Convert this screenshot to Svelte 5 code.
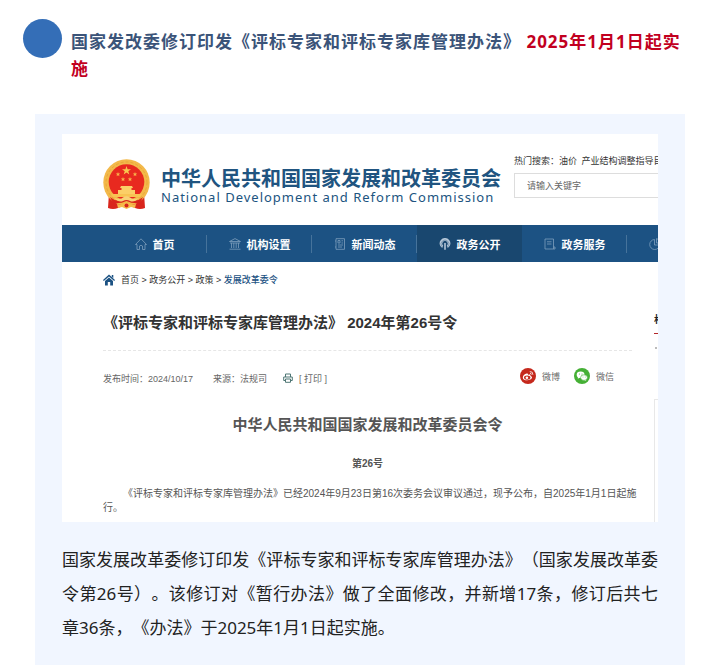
<script lang="ts">
    const navItems = [
        { label: "首页", icon: "home" },
        { label: "机构设置", icon: "bank" },
        { label: "新闻动态", icon: "news" },
        { label: "政务公开", icon: "signal", active: true },
        { label: "政务服务", icon: "doc" },
        { label: "互动交流", icon: "pie" },
    ];

    const crumbs = ["首页", "政务公开", "政策"];

    let keyword = $state("");
</script>

<article class="post">
    <header class="heading">
        <span class="dot"></span>
        <h1>
            国家发改委修订印发《评标专家和评标专家库管理办法》
            <strong>2025年1月1日起实施</strong>
        </h1>
    </header>

    <section class="card">
        <div class="site">
            <div class="masthead">
                <svg class="emblem" viewBox="0 0 47 51">
                    <path d="M6 34 L5 49 Q10 51 15 49 L24 45 L32 49 Q37 51 42 49 L41 34Z" fill="#d9251c" />
                    <circle cx="23.500" cy="23.500" r="23.200" fill="#f3b94a" />
                    <circle cx="23.500" cy="23.500" r="20.500" fill="none" stroke="#e9a838" stroke-width="1" stroke-dasharray="3 2" />
                    <circle cx="23.500" cy="23" r="17.800" fill="#e8291f" />
                    <path d="M23.500 7 L24.600 10.200 H28 L25.300 12.200 L26.300 15.500 L23.500 13.500 L20.700 15.500 L21.700 12.200 L19 10.200 H22.400Z" fill="#f8c750" />
                    <g fill="#f8b04a">
                        <path d="M15 13 l.6 1.500 1.600.1 -1.200 1 .4 1.600 -1.400-.9 -1.400.9 .4-1.600 -1.200-1 1.600-.1z" />
                        <path d="M32 13 l.6 1.500 1.600.1 -1.200 1 .4 1.600 -1.400-.9 -1.400.9 .4-1.600 -1.200-1 1.600-.1z" />
                        <path d="M20 18 l.6 1.500 1.600.1 -1.200 1 .4 1.600 -1.400-.9 -1.400.9 .4-1.600 -1.200-1 1.600-.1z" />
                        <path d="M27 18 l.6 1.500 1.600.1 -1.200 1 .4 1.600 -1.400-.9 -1.400.9 .4-1.600 -1.200-1 1.600-.1z" />
                    </g>
                    <path d="M18 27 h11 l1 2 h-1.500 v2 H32 v4 H15 v-4 h3.500 v-2 H17z" fill="#fbcf67" />
                    <path d="M8 35 H39 L37 38 H10z" fill="#f8c353" />
                    <path d="M7 38 Q15 45 23.500 38 Q32 45 40 38 L37 44 Q30 45 23.500 42 Q17 45 10 44z" fill="#d9251c" />
                    <path d="M11 39 Q18 41 20 38.500 Q23.500 36 27 38.500 Q30 41 36 39 Q31 44 27 42 Q23.500 40 20 42 Q16 44 11 39z" fill="#f9d277" />
                    <path d="M14 45 l5 1 4.500-3 4.500 3 5-1 -1 4 -4-1 -4.500 2 -4.500-2 -4 1z" fill="#f5bd4e" />
                    <circle cx="23.500" cy="46.500" r="2" fill="#d9251c" />
                </svg>
                <div class="brand">
                    <p class="zh">中华人民共和国国家发展和改革委员会</p>
                    <p class="en">National Development and Reform Commission</p>
                </div>
                <div class="search">
                    <p>热门搜索：油价&ensp;产业结构调整指导目录</p>
                    <input type="text" aria-label="搜索" placeholder="请输入关键字" bind:value={keyword} />
                </div>
            </div>

            <nav>
                {#each navItems as item}
                    <a href="#{item.icon}" class:active={item.active}>
                        <svg viewBox="0 0 12 12">
                            {#if item.icon === "home"}
                                <path d="M.5 6.500 L6 .8 L11.500 6.500 H10 V11.500 H7.500 V8 Q6 6.500 4.500 8 V11.500 H2 V6.500z" />
                            {:else if item.icon === "bank"}
                                <path d="M.5 3.500 L6 .6 L11.500 3.500z M1 5 H11 M2.500 5 V10 M4.800 5 V10 M7.200 5 V10 M9.500 5 V10 M.5 11.200 H11.500" />
                            {:else if item.icon === "news"}
                                <path d="M2 .7 H10.500 V11.300 H2z M4 2.500 H6 V5 H4z M7.500 2.800 H9 M7.500 5 H9 M4 7 H9 M4 9 H8 M1 3 H2 M1 9 H2" />
                            {:else if item.icon === "signal"}
                                <path class="solid" d="M3.200 10 A5.400 5.400 0 1 1 8.800 10 L7.800 7.500 A2.600 2.600 0 1 0 4.200 7.500z M5.200 5 H6.800 V11.800 H5.200z" />
                                <path class="ring" d="M3 8.500 A3.900 3.900 0 1 1 9 8.500" />
                            {:else if item.icon === "doc"}
                                <path d="M1 1 H9.500 V9 H11 V11 H1z M3 3.800 H7.500 M3 6 H7.500 M9.500 9 V11" />
                            {:else}
                                <path d="M5.500 1.500 A5 5 0 1 0 10.700 7 H5.500z M7.500 .6 V5 H11.500 A4.500 4.500 0 0 0 7.500 .6z" />
                            {/if}
                        </svg>
                        <span>{item.label}</span>
                    </a>
                {/each}
            </nav>

            <div class="columns">
                <div class="main">
                    <div class="crumbs">
                        <svg viewBox="0 0 12 12">
                            <path d="M6 .5 L12 6 L11.200 7 L6 2.500 L.8 7 L0 6z M2 7 L6 3.600 L10 7 V11.500 H7.200 V8 H4.800 V11.500 H2z M8.800 1 H10.300 V4 L8.800 2.700z" />
                        </svg>
                        <p>
                            {#each crumbs as crumb}<a href="#crumb">{crumb}</a>{" > "}{/each}<a
                                class="current"
                                href="#current">发展改革委令</a
                            >
                        </p>
                    </div>

                    <h2>《评标专家和评标专家库管理办法》 2024年第26号令</h2>

                    <div class="meta">
                        <span>发布时间：2024/10/17</span>
                        <span>来源：法规司</span>
                        <button class="print">
                            <svg viewBox="0 0 10 10">
                                <path d="M2.500 4 V1 H7.500 V4 M2.500 7.500 H.7 V4 H9.300 V7.500 H7.500 M2.500 6 H7.500 V9.300 H2.500z" />
                            </svg>
                            [ 打印 ]
                        </button>
                        <div class="share">
                            <a href="#weibo">
                                <svg viewBox="0 0 16 16">
                                    <circle cx="8" cy="8" r="8" fill="#c5281c" />
                                    <path d="M6.800 5.500 C4.500 5.800 2.700 8 2.800 9.700 C3 13.300 11.500 13 12 9.500 C12.100 8.500 11 8.200 10.500 8 C10.800 6.500 9.600 6.300 8 7 C8.200 6 7.800 5.400 6.800 5.500z" fill="#fff" />
                                    <ellipse cx="7.200" cy="9.600" rx="3.200" ry="2.200" fill="#c5281c" />
                                    <circle cx="6.900" cy="9.700" r="1.300" fill="#fff" />
                                    <path d="M9.800 3.600 Q13 3.200 12.900 6.800 M10 5.300 Q11.400 5.200 11.400 6.600" fill="none" stroke="#fff" stroke-width=".8" />
                                </svg>
                                微博
                            </a>
                            <a href="#wechat">
                                <svg viewBox="0 0 16 16">
                                    <circle cx="8" cy="8" r="8" fill="#45b035" />
                                    <ellipse cx="6.600" cy="6.700" rx="3.900" ry="3.200" fill="#fff" />
                                    <path d="M4 8.500 L3.800 10.700 L6 9.500z M11.500 11 L12.300 13 L10 12z" fill="#fff" />
                                    <ellipse cx="10" cy="9.600" rx="3.400" ry="2.800" fill="#fff" stroke="#45b035" stroke-width=".6" />
                                    <g fill="#45b035">
                                        <circle cx="5.400" cy="6" r=".5" />
                                        <circle cx="8" cy="6" r=".5" />
                                        <circle cx="9" cy="9" r=".4" />
                                        <circle cx="11.200" cy="9" r=".4" />
                                    </g>
                                </svg>
                                微信
                            </a>
                        </div>
                    </div>

                    <h3>中华人民共和国国家发展和改革委员会令</h3>
                    <p class="number">第26号</p>
                    <p class="decree">
                        《评标专家和评标专家库管理办法》已经2024年9月23日第16次委务会议审议通过，现予公布，自2025年1月1日起施行。
                    </p>
                </div>
                <aside>
                    <h4>相关</h4>
                    <span class="bullet"></span>
                    <div class="panel"></div>
                </aside>
            </div>
        </div>

        <p class="summary">
            国家发展改革委修订印发《评标专家和评标专家库管理办法》（国家发展改革委令第26号）。该修订对《暂行办法》做了全面修改，并新增17条，修订后共七章36条，《办法》于2025年1月1日起实施。
        </p>
    </section>
</article>

<style>
    :global(body) {
        background: white;
        font-family: "Liberation Sans", "Noto Sans CJK SC", sans-serif;
        text-spacing-trim: space-all;
    }

    h1,
    h2,
    h3,
    h4,
    p {
        margin: 0;
    }

    a {
        color: inherit;
        text-decoration: none;
    }

    svg {
        flex: none;
    }

    .post {
        padding: 19px 17px 0 23px;
    }

    .heading {
        display: flex;
        gap: 9px;

        & .dot {
            flex: none;
            width: 39px;
            height: 39px;
            border-radius: 50%;
            background: #346eb7;
        }

        & h1 {
            padding-top: 9px;
            color: #3b5479;
            font-family: "Noto Sans", "Noto Sans CJK SC", sans-serif;
            font-size: 17px;
            line-height: 27px;
            letter-spacing: 1px;
        }

        & strong {
            color: #c2001f;
            font-weight: bold;
        }
    }

    .card {
        margin: 32px 0 0 12px;
        padding: 20px 27px;
        background: #f1f6ff;
    }

    .site {
        overflow: hidden;
        background: white;
        color: #555;
        font-size: 9px;
    }

    .masthead {
        display: flex;
        padding: 25px 0 15px 41px;
        white-space: nowrap;
    }

    .emblem {
        width: 47px;
        height: 51px;
    }

    .brand {
        flex: none;
        width: 353px;
        padding: 10px 0 0 11px;
        color: #205480;

        & .zh {
            font-size: 20px;
            font-weight: bold;
            line-height: 21px;
        }

        & .en {
            font-family: "Noto Sans", sans-serif;
            font-size: 13px;
            line-height: 14px;
            letter-spacing: 1px;
        }
    }

    .search {
        flex: none;
        width: 260px;
        margin-top: -5px;
        color: #333;

        & p {
            line-height: 14px;
            margin-bottom: 5px;
        }

        & input {
            box-sizing: border-box;
            width: 100%;
            height: 25px;
            padding: 0 12px;
            border: 1px solid #ddd;
            background: white;
            font: inherit;
        }

        & input::placeholder {
            color: #666;
        }
    }

    nav {
        display: flex;
        padding-left: 40px;
        background: #1c5283;

        & a {
            display: flex;
            flex: 0 0 105px;
            align-items: center;
            justify-content: center;
            gap: 6px;
            height: 37px;
            color: white;
            font-size: 11px;
            font-weight: bold;
            white-space: nowrap;
            background: linear-gradient(#46739b, #46739b) right center / 1px 18px no-repeat;
        }

        & a.active {
            background: #19476f;
        }

        & svg {
            width: 12px;
            height: 12px;
            fill: none;
            stroke: #7f9fbd;
            stroke-width: 0.8;
        }

        & .solid {
            fill: #b4c6d7;
            stroke: none;
        }

        & .ring {
            stroke: #5c7d9b;
            stroke-width: 0.6;
        }
    }

    .columns {
        display: grid;
        grid-template-columns: minmax(0, 1fr) 4px;
        gap: 14px;
        padding-left: 41px;
    }

    .crumbs {
        display: flex;
        align-items: center;
        gap: 6px;
        margin-top: 11px;
        line-height: 14px;
        color: #333;

        & svg {
            width: 12px;
            height: 12px;
            fill: #1c5283;
        }

        & .current {
            color: #1c5283;
            font-weight: 500;
        }
    }

    h2 {
        padding: 25px 0 17px;
        margin-right: 8px;
        border-bottom: 1px dashed #e6e6e6;
        color: #333;
        font-size: 15px;
        line-height: 21px;
    }

    .meta {
        display: flex;
        align-items: center;
        gap: 20px;
        margin-top: 17px;
        height: 20px;
        color: #666;

        & .print {
            display: flex;
            align-items: center;
            gap: 6px;
            margin-left: -4px;
            padding: 0;
            border: 0;
            background: none;
            color: inherit;
            font: inherit;
        }

        & .print svg {
            width: 10px;
            height: 10px;
            fill: none;
            stroke: #4f7775;
        }
    }

    .share {
        display: flex;
        gap: 14px;
        margin: 0 26px 4px auto;

        & a {
            display: flex;
            align-items: center;
            gap: 6px;
        }

        & svg {
            width: 16px;
            height: 16px;
        }
    }

    h3 {
        margin: 26px 8px 0 0;
        color: #555;
        font-size: 15px;
        line-height: 22px;
        text-align: center;
    }

    .number {
        margin: 21px 8px 0 0;
        font-size: 10px;
        font-weight: bold;
        line-height: 14px;
        text-align: center;
    }

    .decree {
        padding-bottom: 7px;
        margin-top: 16px;
        font-size: 10px;
        line-height: 14px;
        text-indent: 2em;
    }

    aside {
        overflow: hidden;
        white-space: nowrap;

        & h4 {
            margin-top: 51px;
            padding-bottom: 6px;
            border-bottom: 1px solid #b3262a;
            color: #222;
            font-size: 10px;
            line-height: 14px;
        }

        & .bullet {
            display: block;
            width: 2px;
            height: 2px;
            margin: 13px 0 0 1px;
            background: #bbb;
        }

        & .panel {
            height: 100%;
            margin-top: 50px;
            border: solid #e8e8e8;
            border-width: 1px 0 0 1px;
        }
    }

    .summary {
        margin-top: 21px;
        color: #222;
        font-family: "Noto Sans", "Noto Sans CJK SC", sans-serif;
        font-size: 17px;
        line-height: 34px;
        text-align: justify;
    }
</style>
